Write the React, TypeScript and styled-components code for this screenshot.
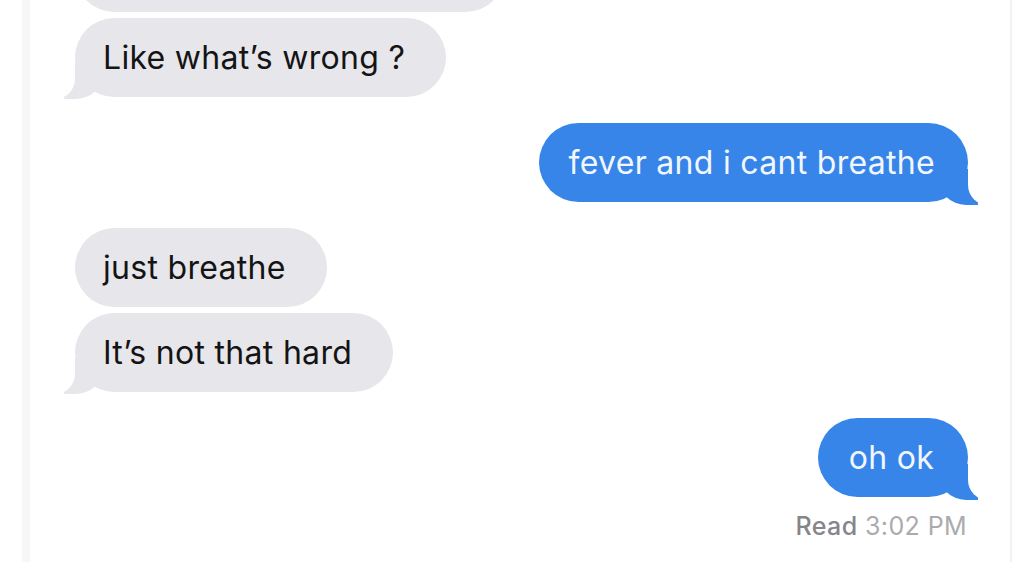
import React from "react";
import styled, { createGlobalStyle, css } from "styled-components";

const GlobalStyle = createGlobalStyle`
  html, body {
    margin: 0;
    padding: 0;
    background: #ffffff;
    overflow: hidden;
  }
`;

type Message = {
  from: "them" | "me";
  text: string;
  tail?: boolean;
  spaced?: boolean;
};

const messages: Message[] = [
  { from: "them", text: "", tail: false },
  { from: "them", text: "Like what’s wrong ?", tail: true },
  { from: "me", text: "fever and i cant breathe", tail: true, spaced: true },
  { from: "them", text: "just breathe", spaced: true },
  { from: "them", text: "It’s not that hard", tail: true },
  { from: "me", text: "oh ok", tail: true, spaced: true },
];

const App = () => {
  return (
    <>
      <GlobalStyle />
      <Page>
        <Card>
          <Thread>
            {messages.map((m, i) => (
              <Bubble
                key={i}
                $me={m.from === "me"}
                $tail={!!m.tail}
                $spaced={!!m.spaced}
                $cut={i === 0}
              >
                {m.text}
              </Bubble>
            ))}
            <Receipt>
              <strong>Read</strong> 3:02 PM
            </Receipt>
          </Thread>
        </Card>
      </Page>
    </>
  );
};

const Page = styled.main`
  width: 1024px;
  height: 562px;
  overflow: hidden;
  background: #ffffff;
  padding-left: 22px;
  padding-right: 12px;
  box-sizing: border-box;
`;

const Card = styled.section`
  height: 100%;
  border-left: 8px solid #f7f7f7;
  border-right: 2px solid #f2f2f2;
  background: #ffffff;
`;

const Thread = styled.div`
  display: flex;
  flex-direction: column;
  padding: 0 42px 0 45px;
`;

const Bubble = styled.div<{
  $me: boolean;
  $tail: boolean;
  $spaced: boolean;
  $cut: boolean;
}>`
  position: relative;
  align-self: ${(p) => (p.$me ? "flex-end" : "flex-start")};
  height: 79px;
  padding: ${(p) => (p.$me ? "0 33px 0 30px" : "0 41px 0 28px")};
  min-width: ${(p) => (p.$me ? "150px" : "0")};
  border-radius: 40px;
  box-sizing: border-box;
  text-align: center;
  font-family: Inter, "Liberation Sans", sans-serif;
  font-size: 32px;
  letter-spacing: 0.3px;
  line-height: 79px;
  white-space: nowrap;
  margin-top: ${(p) => (p.$cut ? "-67px" : p.$spaced ? "26px" : "6px")};
  width: ${(p) => (p.$cut ? "430px" : "auto")};
  background: ${(p) => (p.$me ? "#3785e8" : "#e6e6eb")};
  color: ${(p) => (p.$me ? "#f2f7ff" : "#141414")};

  ${(p) =>
    p.$tail &&
    !p.$me &&
    css`
      &::before {
        content: "";
        position: absolute;
        left: -11px;
        bottom: -2px;
        width: 40px;
        height: 36px;
        background: #e6e6eb;
        border-bottom-right-radius: 28px;
      }
      &::after {
        content: "";
        position: absolute;
        left: -40px;
        bottom: -2px;
        width: 40px;
        height: 38px;
        background: #ffffff;
        border-bottom-right-radius: 20px;
      }
    `}

  ${(p) =>
    p.$tail &&
    p.$me &&
    css`
      &::before {
        content: "";
        position: absolute;
        right: -10px;
        bottom: -3px;
        width: 40px;
        height: 36px;
        background: #3785e8;
        border-bottom-left-radius: 28px;
      }
      &::after {
        content: "";
        position: absolute;
        right: -40px;
        bottom: -3px;
        width: 40px;
        height: 38px;
        background: #ffffff;
        border-bottom-left-radius: 20px;
      }
    `}
`;

const Receipt = styled.div`
  align-self: flex-end;
  margin-top: 14px;
  margin-right: 1px;
  font-family: Inter, "Liberation Sans", sans-serif;
  font-size: 25px;
  letter-spacing: 0.4px;
  line-height: 30px;
  color: #ababaf;

  strong {
    font-weight: 500;
    color: #85858a;
  }
`;

export default App;
